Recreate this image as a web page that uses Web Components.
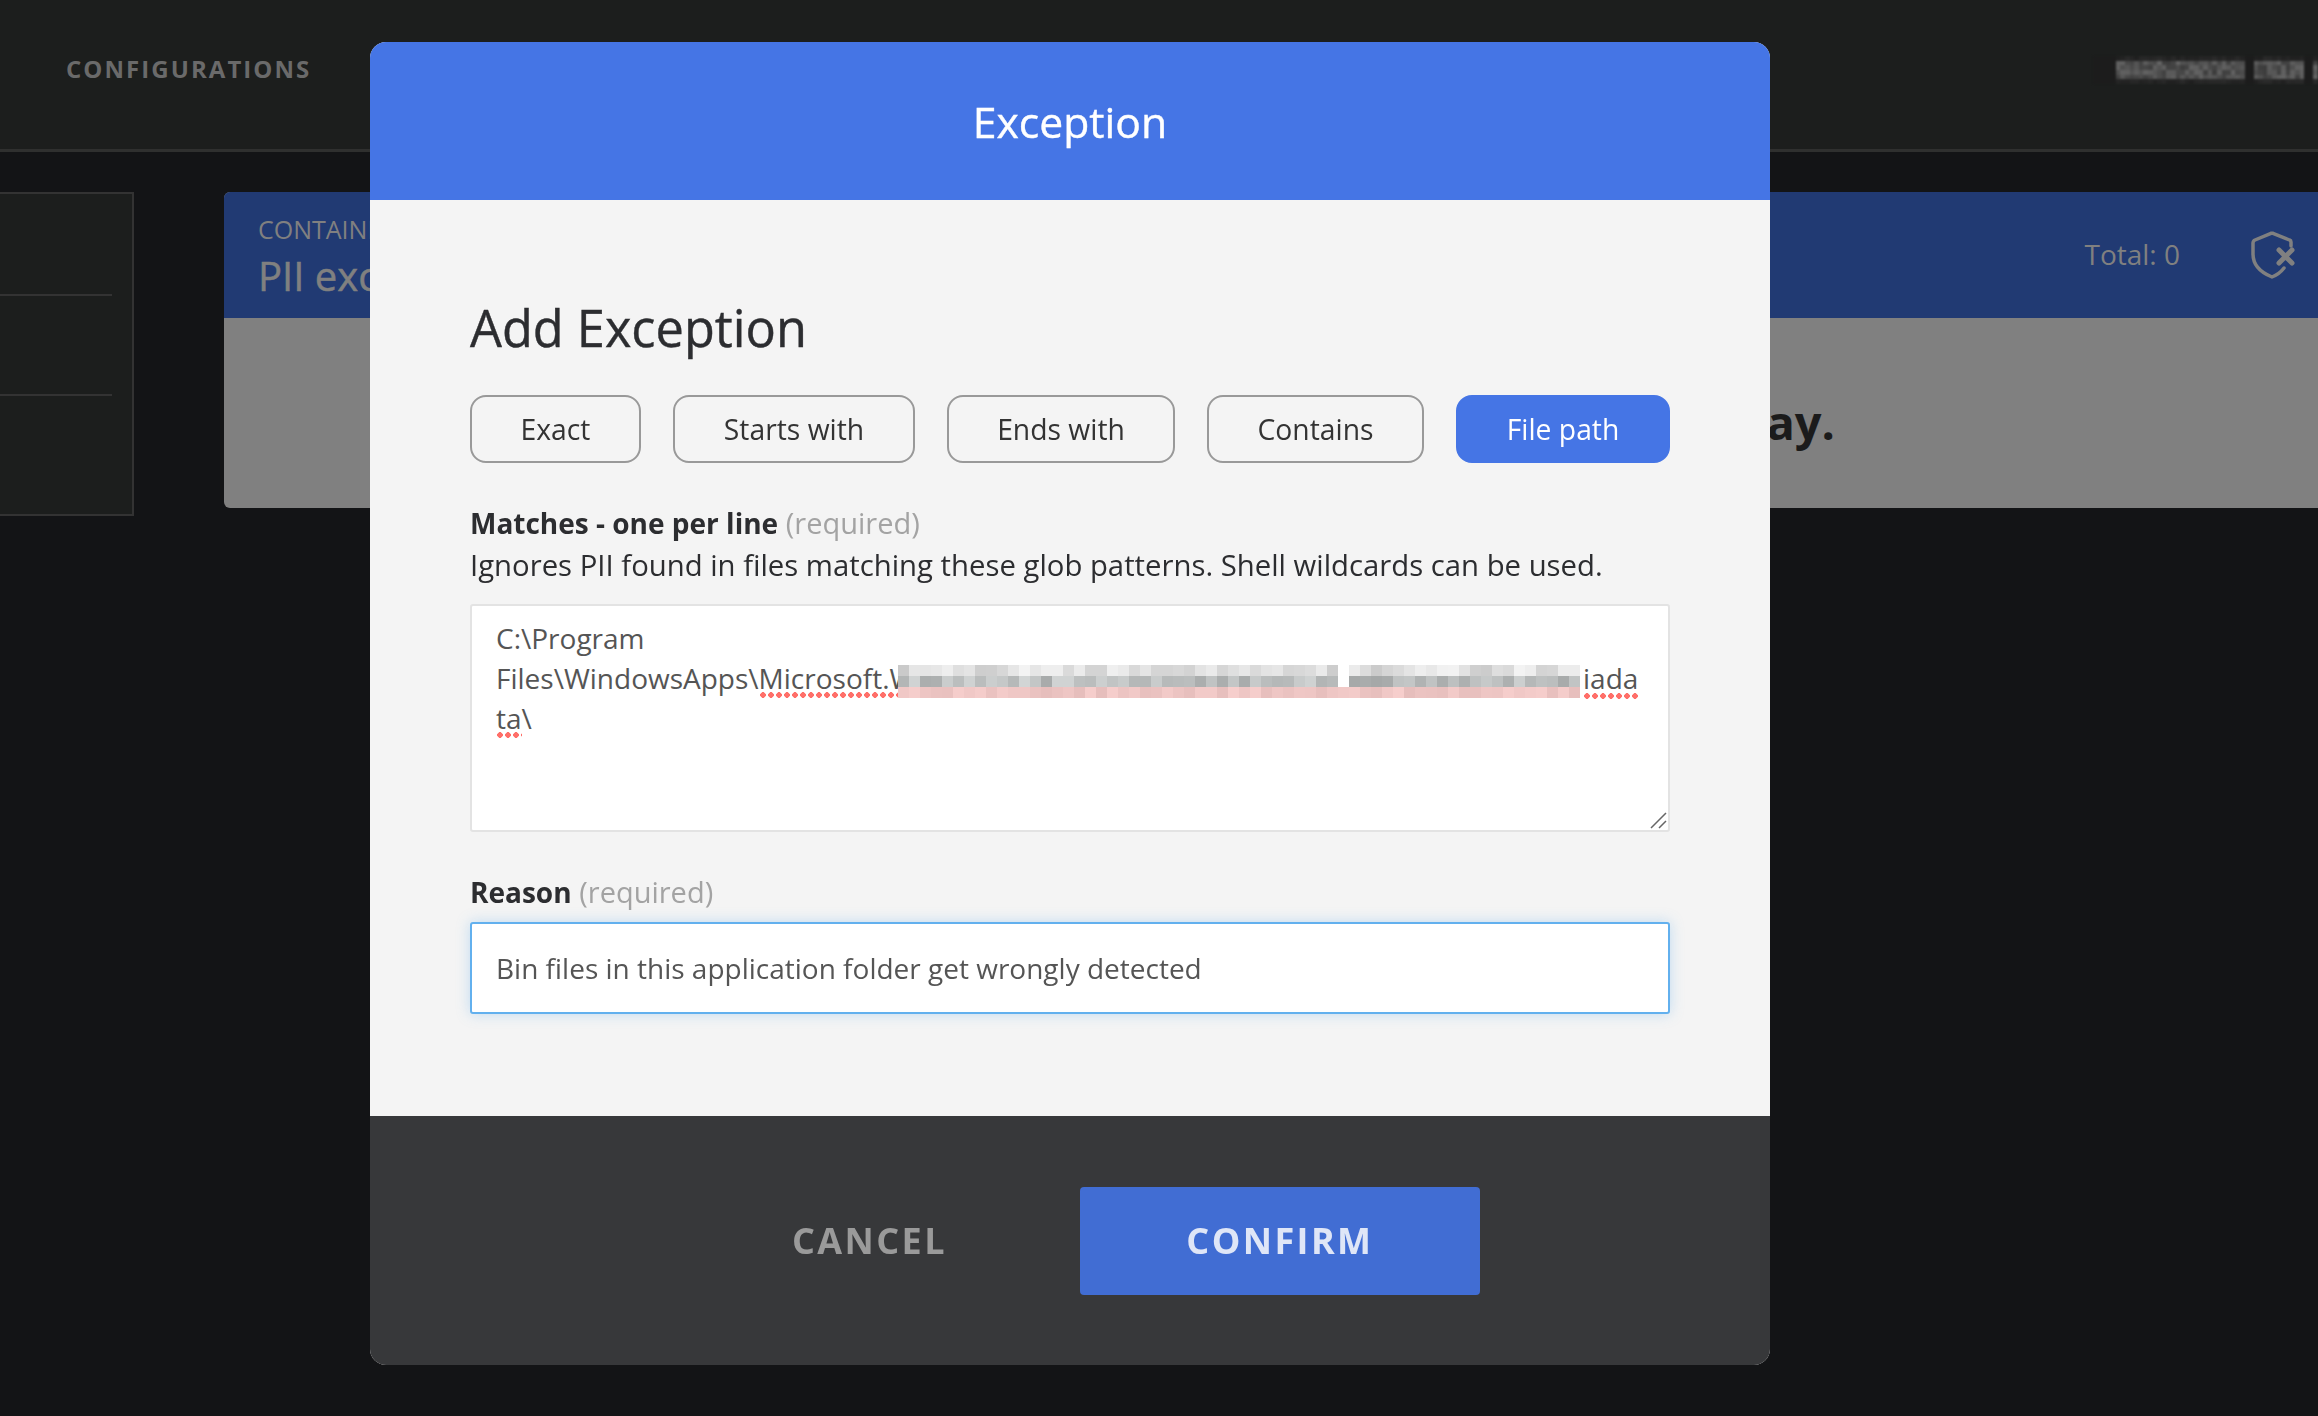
<!DOCTYPE html>
<html>
<head>
<meta charset="utf-8">
<title>Exception</title>
<style>
  html, body { margin: 0; height: 100%; background: #131416; overflow: hidden; }
  body { font-family: "Open Sans", "Noto Sans", sans-serif; }
</style>
</head>
<body>
<config-page>
  <top-nav slot="nav">CONFIGURATIONS</top-nav>
  <side-panel slot="side"></side-panel>
  <policy-card slot="main" eyebrow="CONTAINER" heading="PII exceptions" total="Total: 0">ay.</policy-card>
</config-page>

<exception-modal heading="Exception">
  <h2 slot="title">Add Exception</h2>
  <choice-button slot="choices" style="width:171px">Exact</choice-button>
  <choice-button slot="choices" style="width:242px">Starts with</choice-button>
  <choice-button slot="choices" style="width:228px">Ends with</choice-button>
  <choice-button slot="choices" style="width:217px">Contains</choice-button>
  <choice-button slot="choices" style="width:214px" active>File path</choice-button>
  <field-label slot="fields" name="Matches - one per line">Ignores PII found in files matching these glob patterns. Shell wildcards can be used.</field-label>
  <path-area slot="fields"></path-area>
  <field-label slot="fields" name="Reason" class="reason"></field-label>
  <reason-input slot="fields">Bin files in this application folder get wrongly detected</reason-input>
  <modal-action slot="actions">CANCEL</modal-action>
  <modal-action slot="actions" primary>CONFIRM</modal-action>
</exception-modal>

<script>
// small seeded random so the censored strips look the same on every load
function seeded(seed) {
  let s = seed;
  return () => {
    s = (s * 16807) % 2147483647;
    return (s - 1) / 2147483646;
  };
}

class ConfigPage extends HTMLElement {
  constructor() {
    super();
    this.attachShadow({ mode: "open" }).innerHTML = `
      <style>
        :host { display: block; height: 100vh; background: #131416; color: #808080; }
        .row { display: flex; gap: 90px; padding-top: 40px; align-items: flex-start; }
        ::slotted([slot="main"]) { flex: 1; }
      </style>
      <slot name="nav"></slot>
      <div class="row">
        <slot name="side"></slot>
        <slot name="main"></slot>
      </div>
    `;
  }
}

class TopNav extends HTMLElement {
  constructor() {
    super();
    this.attachShadow({ mode: "open" }).innerHTML = `
      <style>
        :host {
          display: flex;
          align-items: center;
          justify-content: space-between;
          box-sizing: border-box;
          height: 152px;
          padding: 0 0 12px 66px;
          background: #1c1e1d;
          border-bottom: 3px solid #2f302f;
          color: #6a6a6a;
          font: 700 24px "Open Sans", sans-serif;
          letter-spacing: 2.05px;
        }
        pixel-strip { filter: blur(1.2px); margin-top: 3px; }
      </style>
      <span><slot></slot></span>
      <pixel-strip cols="49" cell="4.6" rowh="4.6" kind="name"></pixel-strip>
    `;
  }
}

class SidePanel extends HTMLElement {
  constructor() {
    super();
    this.attachShadow({ mode: "open" }).innerHTML = `
      <style>
        :host {
          display: block;
          box-sizing: border-box;
          width: 134px;
          height: 324px;
          background: #1c1e1d;
          border: 2px solid #333;
          border-left: 0;
        }
        div { height: 100px; margin-right: 20px; border-bottom: 2px solid #333; }
        div + div { height: 98px; }
      </style>
      <div></div>
      <div></div>
    `;
  }
}

class PolicyCard extends HTMLElement {
  constructor() {
    super();
    this.attachShadow({ mode: "open" }).innerHTML = `
      <style>
        :host { display: block; height: 316px; border-radius: 6px 0 0 6px; overflow: hidden; background: #808080; }
        header {
          display: flex;
          align-items: center;
          justify-content: space-between;
          box-sizing: border-box;
          height: 126px;
          padding: 0 22px 0 34px;
          background: #213a73;
          color: #808080;
        }
        .eyebrow { font-size: 25px; line-height: 34px; margin-top: 4px; }
        .heading { font-size: 40px; line-height: 54px; margin-top: 3px; -webkit-text-stroke: 0.5px #808080; }
        .right { display: flex; align-items: center; gap: 70px; font-size: 28px; }
        .right span { padding-bottom: 2px; }
        .body {
          display: flex;
          justify-content: flex-end;
          align-items: center;
          box-sizing: border-box;
          height: 190px;
          padding: 18px 483px 0 0;
          color: #1b1b1b;
          font: 700 47px "Open Sans", sans-serif;
        }
        svg { display: block; }
      </style>
      <header>
        <div>
          <div class="eyebrow">${this.getAttribute("eyebrow")}</div>
          <div class="heading">${this.getAttribute("heading")}</div>
        </div>
        <div class="right">
          <span>${this.getAttribute("total")}</span>
          <svg width="46" height="50" viewBox="0 0 46 50" fill="none" stroke="#808080" stroke-linecap="round" stroke-linejoin="round">
            <path stroke-width="3.5" d="M41 16V12Q41 10.5 39.5 10L23 3.3Q22 3 21 3.3L5 10Q3 11 3 13V24C3 36 12 43 22 47C27 45 31 42 34 38"/>
            <path stroke-width="5" d="M29 20L42 33M42 20L29 33"/>
          </svg>
        </div>
      </header>
      <div class="body"><slot></slot></div>
    `;
  }
}

class ExceptionModal extends HTMLElement {
  constructor() {
    super();
    this.attachShadow({ mode: "open" }).innerHTML = `
      <style>
        :host {
          position: fixed;
          left: 370px;
          top: 42px;
          display: block;
          width: 1400px;
          border-radius: 16px;
          overflow: hidden;
          background: #f4f4f4;
          color: #2c2d30;
        }
        header {
          height: 158px;
          display: flex;
          align-items: center;
          justify-content: center;
          background: #4575e5;
          color: #fff;
          font-size: 42.7px;
          -webkit-text-stroke: 0.4px #fff;
        }
        .body { padding: 95px 100px 102px; }
        ::slotted(h2) {
          margin: 0;
          font-size: 50.5px;
          line-height: 66px;
          font-weight: 400;
          -webkit-text-stroke: 0.4px #2c2d30;
        }
        .choices { display: flex; gap: 32px; margin: 34px 0 39px; }
        .fields { display: flex; flex-direction: column; }
        footer {
          box-sizing: border-box;
          height: 249px;
          padding: 71px 0 0 422px;
          display: flex;
          align-items: flex-start;
          gap: 133px;
          background: #37383a;
        }
      </style>
      <header>${this.getAttribute("heading")}</header>
      <div class="body">
        <slot name="title"></slot>
        <div class="choices"><slot name="choices"></slot></div>
        <div class="fields"><slot name="fields"></slot></div>
      </div>
      <footer><slot name="actions"></slot></footer>
    `;
  }
}

class ChoiceButton extends HTMLElement {
  constructor() {
    super();
    this.attachShadow({ mode: "open" }).innerHTML = `
      <style>
        :host {
          display: flex;
          align-items: center;
          justify-content: center;
          box-sizing: border-box;
          height: 68px;
          border: 2px solid #999;
          border-radius: 16px;
          color: #333;
          font-size: 28.3px;
          white-space: nowrap;
        }
        :host([active]) { background: #4575e5; border-color: #4575e5; color: #fff; }
      </style>
      <slot></slot>
    `;
  }
}

class FieldLabel extends HTMLElement {
  constructor() {
    super();
    this.attachShadow({ mode: "open" }).innerHTML = `
      <style>
        :host { display: block; font-size: 29.3px; line-height: 42px; color: #2c2d30; margin-bottom: 18px; }
        :host(.reason) { margin-top: 39px; margin-bottom: 9px; }
        b { font-weight: 700; font-size: 28px; }
        i { font-style: normal; color: #a3a3a3; font-size: 29px; }
      </style>
      <div><b>${this.getAttribute("name")}</b> <i>(required)</i></div>
      <div><slot></slot></div>
    `;
  }
}

class PathArea extends HTMLElement {
  constructor() {
    super();
    this.attachShadow({ mode: "open" }).innerHTML = `
      <style>
        :host {
          position: relative;
          display: block;
          box-sizing: border-box;
          height: 228px;
          padding: 12px 24px;
          background: #fff;
          border: 2px solid #e3e3e3;
          border-radius: 3px;
          color: #555;
          font-size: 28px;
          line-height: 40px;
        }
        .line { white-space: nowrap; }
        .bad {
          padding-bottom: 2px;
          background: radial-gradient(circle, #ff6f69 2.6px, transparent 3px) 0 calc(100% - 1px) / 8px 6px repeat-x;
        }
        pixel-strip { position: absolute; left: 426px; top: 59px; }
        .after { position: absolute; left: 1111px; top: 52px; }
        svg { position: absolute; right: 1px; bottom: 1px; }
      </style>
      <div class="line">C:\\Program</div>
      <div class="line">Files\\WindowsApps\\<span class="bad">Microsoft.W</span></div>
      <div class="line"><span class="bad">ta</span>\\</div>
      <pixel-strip cols="62" cell="11" rowh="11" kind="path"></pixel-strip>
      <span class="after bad">iada</span>
      <svg width="18" height="18" viewBox="0 0 18 18" stroke="#666" stroke-width="1.5" fill="none">
        <path d="M2 17L17 2M10 17L17 10"/>
      </svg>
    `;
  }
}

class ReasonInput extends HTMLElement {
  constructor() {
    super();
    this.attachShadow({ mode: "open" }).innerHTML = `
      <style>
        :host {
          display: flex;
          align-items: center;
          box-sizing: border-box;
          height: 92px;
          padding: 0 24px;
          background: #fff;
          border: 2px solid #62b0ee;
          border-radius: 3px;
          box-shadow: 0 0 14px rgba(98, 176, 238, 0.35);
          color: #555;
          font-size: 28px;
        }
      </style>
      <slot></slot>
    `;
  }
}

class ModalAction extends HTMLElement {
  constructor() {
    super();
    this.attachShadow({ mode: "open" }).innerHTML = `
      <style>
        :host {
          display: flex;
          align-items: center;
          justify-content: center;
          box-sizing: border-box;
          height: 108px;
          padding-bottom: 2px;
          color: #9a9a9a;
          font-size: 36px;
          font-weight: 700;
          letter-spacing: 2.4px;
        }
        :host([primary]) { width: 400px; border-radius: 4px; background: #416dd3; color: #dfe6f7; }
      </style>
      <slot></slot>
    `;
  }
}

// censored text, drawn as a grid of small blocks
class PixelStrip extends HTMLElement {
  constructor() {
    super();
    const cols = +this.getAttribute("cols");
    const cell = this.getAttribute("cell");
    const rowh = this.getAttribute("rowh");
    const kind = this.getAttribute("kind");
    const rand = seeded(kind === "path" ? 4711 : 291);
    let cells = "";

    if (kind === "path") {
      for (let r = 0; r < 3; r++) {
        for (let c = 0; c < cols; c++) {
          let color;
          if (r === 0) {
            const v = 200 + Math.round(rand() * 44);
            color = `rgb(${v},${v},${v})`;
          } else if (r === 1) {
            const v = 168 + Math.round(rand() * 42) + (c > 40 ? -6 : 0);
            color = `rgb(${v},${v + 3},${v + 3})`;
          } else {
            const v = 190 + Math.round(rand() * 16);
            color = `rgb(${v + 40},${v},${v - 2})`;
          }
          if (c === 40 && r < 2) color = "#fff";
          cells += `<i style="background:${color}"></i>`;
        }
      }
    } else {
      const gaps = [[0, 4], [33, 34], [46, 47]];
      for (let r = 0; r < 6; r++) {
        for (let c = 0; c < cols; c++) {
          const edge = r === 0 || r === 5;
          const gap = gaps.some(g => c >= g[0] && c <= g[1]);
          const v = gap ? 28 : Math.round((edge ? 32 : 60) + rand() * (edge ? 10 : 40));
          cells += `<i style="background:rgb(${v},${v},${v})"></i>`;
        }
      }
    }

    this.attachShadow({ mode: "open" }).innerHTML = `
      <style>
        :host { display: grid; grid-template-columns: repeat(${cols}, ${cell}px); grid-auto-rows: ${rowh}px; }
        i { display: block; }
      </style>
      ${cells}
    `;
  }
}

// children first, so nested strips exist when the parents stamp them
customElements.define("pixel-strip", PixelStrip);
customElements.define("config-page", ConfigPage);
customElements.define("top-nav", TopNav);
customElements.define("side-panel", SidePanel);
customElements.define("policy-card", PolicyCard);
customElements.define("exception-modal", ExceptionModal);
customElements.define("choice-button", ChoiceButton);
customElements.define("field-label", FieldLabel);
customElements.define("path-area", PathArea);
customElements.define("reason-input", ReasonInput);
customElements.define("modal-action", ModalAction);
</script>
</body>
</html>
